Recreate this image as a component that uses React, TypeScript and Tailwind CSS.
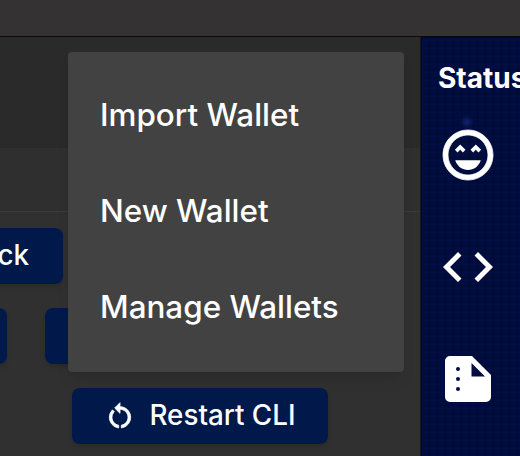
import { MdCode } from "react-icons/md"

const menuItems = ["Import Wallet", "New Wallet", "Manage Wallets"]

function NavyButton({ className, children }: { className: string; children?: React.ReactNode }) {
    return (
        <button className={`flex h-14 shrink-0 items-center rounded-lg bg-[#00194b] text-[27.8px] font-medium text-white shadow-md ${className}`}>
            {children}
        </button>
    )
}

function RestartIcon() {
    return (
        <svg viewBox="0 0 24 24" fill="currentColor" stroke="currentColor" strokeWidth={0.6} className="h-8 w-8">
            <path d="M12 5V2L8 6l4 4V7c3.31 0 6 2.69 6 6 0 2.97-2.17 5.43-5 5.91v2.02c3.95-.49 7-3.85 7-7.93 0-4.42-3.58-8-8-8zm-6 8c0-1.65.67-3.15 1.76-4.24L6.34 7.34A7.96 7.96 0 0 0 4 13c0 4.08 3.05 7.44 7 7.93v-2.02c-2.83-.48-5-2.94-5-5.91z" />
        </svg>
    )
}

function HappyIcon() {
    return (
        <svg viewBox="0 0 24 24" fill="currentColor" className="h-[60px] w-[60px]">
            <path
                stroke="currentColor"
                strokeWidth={0.3}
                d="M12 2C6.47 2 2 6.48 2 12s4.47 10 10 10 10-4.48 10-10S17.52 2 12 2zm0 18c-4.42 0-8-3.58-8-8s3.58-8 8-8 8 3.58 8 8-3.58 8-8 8z"
            />
            <path d="M8.88 7.82 6.76 9.94 7.82 11l1.06-1.06L9.94 11 11 9.94z" />
            <path d="M15.12 7.82 13 9.94 14.06 11l1.06-1.06L16.18 11l1.06-1.06z" />
            <path d="M12 18c2.33 0 4.31-1.46 5.11-3.9H6.89C7.69 16.54 9.67 18 12 18z" />
        </svg>
    )
}

function NotesIcon() {
    return (
        <svg viewBox="0 0 60 60" className="h-[60px] w-[60px]">
            <path
                fill="#fff"
                d="M11 7h23l19 19v22a5 5 0 0 1-5 5H12a5 5 0 0 1-5-5V12a5 5 0 0 1 5-5z"
            />
            <path fill="#000d42" d="M33.5 14 47 27.5H33.5z" />
            <circle cx="20" cy="20" r="2" fill="#000d42" />
            <circle cx="20" cy="30" r="2" fill="#000d42" />
            <circle cx="20" cy="40" r="2" fill="#000d42" />
        </svg>
    )
}

export default function App() {
    return (
        <div className="relative flex h-[456px] w-[520px] flex-col overflow-hidden bg-[#303030] font-['Inter',sans-serif]">
            <header className="h-[37px] shrink-0 border-b border-[#0a0a0a] bg-[#343232]" />
            <div className="flex min-h-0 flex-1">
                <main className="flex w-[420px] shrink-0 flex-col">
                    <div className="h-[111px] shrink-0 bg-[#2a2a2a]" />
                    <div className="h-[64px] shrink-0 border-b border-[#3a3a3a] bg-[#2f2f2f]" />
                    <div className="flex flex-col pt-[16px]">
                        <div className="-ml-[193px] flex">
                            <NavyButton className="w-[256px] justify-end pr-[34px]">Back</NavyButton>
                        </div>
                        <div className="-ml-[193px] mt-6 flex gap-[38px]">
                            <NavyButton className="w-[200px]" />
                            <NavyButton className="w-[200px]" />
                        </div>
                        <div className="mt-6 flex justify-center pr-[20px]">
                            <NavyButton className="w-[256px] justify-center gap-[13px]">
                                <RestartIcon />
                                Restart CLI
                            </NavyButton>
                        </div>
                    </div>
                </main>
                <aside className="flex flex-1 flex-col items-start border-l border-[#161616] bg-[#000d42] bg-[linear-gradient(rgba(0,0,0,0.25)_1px,transparent_1px),linear-gradient(90deg,rgba(0,0,0,0.25)_1px,transparent_1px)] bg-[size:8px_8px] pl-[17px] pt-[24px] text-white">
                    <h2 className="text-[28px] leading-[34px] font-bold whitespace-nowrap">Status</h2>
                    <div className="relative mt-[30px] flex flex-col items-center gap-[52px]">
                        <div className="absolute left-[25px] top-[-7px] h-2 w-2 rounded-full bg-[#1c2f80] opacity-70 blur-[2px]" />
                        <HappyIcon />
                        <MdCode className="h-[60px] w-[60px]" />
                        <NotesIcon />
                    </div>
                </aside>
            </div>
            <div className="absolute left-[68px] top-[52px] flex h-[320px] w-[336px] flex-col rounded bg-[#424242] py-4 shadow-lg">
                {menuItems.map((item) => (
                    <div key={item} className="flex h-24 items-center px-8 text-[31.4px] font-medium text-white">
                        {item}
                    </div>
                ))}
            </div>
        </div>
    )
}
